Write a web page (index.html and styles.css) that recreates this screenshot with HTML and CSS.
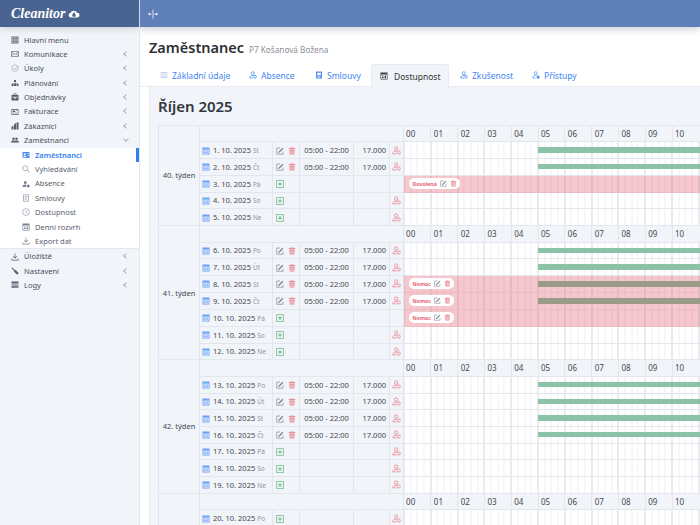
FILE: index.html
```html
<!DOCTYPE html>
<html lang="cs">
<head>
<meta charset="utf-8">
<title>Zaměstnanec</title>
<link rel="stylesheet" href="styles.css">
</head>
<body>
<svg class="defs" aria-hidden="true">
<symbol id="grid" viewBox="0 0 16 16"><path fill="currentColor" d="M1 1h14v14H1zM2.500 2.500v2.500h2.500v-2.500zM6.700 2.500v2.500h2.600v-2.500zM11 2.500v2.500h2.500v-2.500zM2.500 6.700v2.600h2.500v-2.600zM6.700 6.700v2.600h2.600v-2.600zM11 6.700v2.600h2.500v-2.600zM2.500 11v2.500h2.500v-2.500zM6.700 11v2.500h2.600v-2.500zM11 11v2.500h2.500v-2.500z" fill-rule="evenodd"/></symbol>
<symbol id="mail" viewBox="0 0 16 16"><path fill="none" stroke="currentColor" stroke-width="1.200" d="M1 3h14v10H1zM1 4l7 5 7-5M1 12l5-4.500M15 12l-5-4.500"/></symbol>
<symbol id="check" viewBox="0 0 16 16"><circle cx="8" cy="8" r="6.500" fill="none" stroke="currentColor" stroke-width="1.200"/><path fill="none" stroke="currentColor" stroke-width="1.500" d="M5 8l2.500 2.500L13 5"/></symbol>
<symbol id="tree" viewBox="0 0 16 16"><path fill="currentColor" d="M6 2h4v4H6zM1 10h4v4H1zM6 10h4v4H6zM11 10h4v4h-4zM7.500 6h1v2h4.500v2h-1V9H8.500v1h-1V9H4v1H3V8h4.500z"/></symbol>
<symbol id="case" viewBox="0 0 16 16"><path fill="currentColor" fill-rule="evenodd" d="M5 1h6v3h4v11H1V4h4zM6.300 2.300V4h3.400V2.300zM2.500 7.500v1.500h11V7.500zM6.500 9.500v2h3v-2z"/></symbol>
<symbol id="inv" viewBox="0 0 16 16"><path fill="currentColor" fill-rule="evenodd" d="M1 2h14v12H1zM2.300 3.300v9.400h11.400V3.300zM3.500 5h5v3h-5zM3.500 9.500h9v1h-9zM10 5h2.500v1H10z"/></symbol>
<symbol id="bld" viewBox="0 0 16 16"><path fill="currentColor" d="M1 15V9l4-1v7zM6 15V5l4-3v13zM11 15V1h4v14z"/></symbol>
<symbol id="team" viewBox="0 0 16 16"><path fill="currentColor" d="M5 3a2.500 2.500 0 1 1 0 5 2.500 2.500 0 0 1 0-5zM11 3a2.500 2.500 0 1 1 0 5 2.500 2.500 0 0 1 0-5zM0 13c0-3 2-4 5-4 1.300 0 2.300.2 3 .7.700-.5 1.700-.7 3-.7 3 0 5 1 5 4H0z"/></symbol>
<symbol id="card" viewBox="0 0 16 16"><path fill="currentColor" fill-rule="evenodd" d="M1 2h14v12H1zM5.500 4.500a2 2 0 1 0 0 4 2 2 0 0 0 0-4zM2.500 12.500h6c0-2-1-3-3-3s-3 1-3 3zM10 5v1h3.500V5zM10 8v1h3.500V8z"/></symbol>
<symbol id="search" viewBox="0 0 16 16"><circle cx="6.500" cy="6.500" r="5" fill="none" stroke="currentColor" stroke-width="1.200"/><path stroke="currentColor" stroke-width="1.600" d="M10.500 10.500L15 15"/></symbol>
<symbol id="userm" viewBox="0 0 16 16"><path fill="currentColor" d="M6.500 2a3 3 0 1 1 0 6 3 3 0 0 1 0-6zM1 14c0-3.500 2-5 5.500-5 1 0 2 .2 2.700.5A4 4 0 0 0 8.500 14H1z"/><circle cx="12.500" cy="12" r="3" fill="currentColor"/></symbol>
<symbol id="doc" viewBox="0 0 16 16"><path fill="none" stroke="currentColor" stroke-width="1.200" d="M3 1.500h10v13H3zM5.500 5h5M5.500 8h5M5.500 11h3"/></symbol>
<symbol id="docf" viewBox="0 0 16 16"><path fill="currentColor" fill-rule="evenodd" d="M2 1h12v14H2zM4.500 3.500v5h7v-5zM4.500 10v1h7v-1zM4.500 12v1h5v-1z"/></symbol>
<symbol id="clock" viewBox="0 0 16 16"><circle cx="8" cy="8" r="6.800" fill="none" stroke="currentColor" stroke-width="1.100"/><path fill="none" stroke="currentColor" d="M8 4v4.500l3 1.500"/></symbol>
<symbol id="sched" viewBox="0 0 16 16"><path fill="currentColor" fill-rule="evenodd" d="M1 1h14v14H1zM2.300 5v8.700h11.400V5zM4 7h2v2H4zM7 7h2v2H7zM10 7h2v5h-2zM4 10h2v2H4zM7 10h2v2H7z"/></symbol>
<symbol id="down" viewBox="0 0 16 16"><path fill="currentColor" d="M7.300 1h1.400v7.500l2.300-2.300 1 1L8 11 4 7.200l1-1 2.300 2.300zM1 11h1.500v2.500h11V11H15v4H1z"/></symbol>
<symbol id="wrench" viewBox="0 0 16 16"><path fill="currentColor" d="M1 2.500L2.500 1 8 6.500l1.500-.5L15 12c.5 1-1.800 3.200-3 3L6 9.500 6.500 8z"/></symbol>
<symbol id="logs" viewBox="0 0 16 16"><path fill="currentColor" d="M1 1h14v3H1zM1 5h14v1.500H1zM1 7.500h14V9H1zM1 10h14v1.500H1zM1 12.500h14V14H1z"/></symbol>
<symbol id="list" viewBox="0 0 16 16"><path fill="currentColor" d="M1 3h14v1.300H1zM1 7.300h14v1.300H1zM1 11.700h14V13H1z"/></symbol>
<symbol id="person" viewBox="0 0 16 16"><circle cx="7.500" cy="4.500" r="3" fill="none" stroke="currentColor" stroke-width="1.600"/><path fill="none" stroke="currentColor" stroke-width="1.600" d="M8 14H1.500c0-3.500 2.500-5 6-5 .6 0 1.200.1 1.700.2"/><circle cx="12" cy="11.500" r="2.800" fill="none" stroke="currentColor" stroke-width="1.600"/></symbol>
<symbol id="personb" viewBox="0 0 16 16"><circle cx="7.500" cy="4.500" r="3" fill="none" stroke="currentColor" stroke-width="1.400"/><path fill="none" stroke="currentColor" stroke-width="1.400" d="M7 14H1.500c0-3.500 2.500-5 6-5 .6 0 1.200.1 1.700.2"/><path fill="currentColor" d="M9.500 9.500H15V15H9.500z"/></symbol>
<symbol id="cal" viewBox="0 0 16 16"><path fill="currentColor" d="M1 1h14v14H1z"/><path fill="#fff" fill-opacity=".7" d="M2.500 5h11v8.500h-11z"/><path fill="currentColor" fill-opacity=".75" d="M4 7h2v2H4zM7 7h2v2H7zM10 7h2v2h-2zM4 10h2v2H4zM7 10h2v2H7zM10 10h2v2h-2z"/></symbol>
<symbol id="edit" viewBox="0 0 16 16"><path fill="none" stroke="currentColor" stroke-width="1.300" d="M14 9v5.500H1.500V2H8"/><path fill="currentColor" d="M5 9.500L12.800 1.700l1.800 1.800L6.800 11.300 4.500 12z"/></symbol>
<symbol id="trash" viewBox="0 0 16 16"><path fill="currentColor" fill-rule="evenodd" d="M5.500 1h5l.5 1h3.500v2h-13V2H5zM2.500 5h11l-1 10h-9zM5 7l.4 6.500h1L6 7zM7.500 7v6.500h1V7zM10 7l-.4 6.500h1L11 7z"/></symbol>
<symbol id="plus" viewBox="0 0 16 16"><path fill="#e9f5ee" stroke="currentColor" stroke-width="1.500" d="M1 1h14v14H1z"/><path fill="currentColor" d="M7.200 4h1.600v3.200H12v1.600H8.800V12H7.200V8.800H4V7.200h3.200z"/></symbol>
<symbol id="split" viewBox="0 0 16 16"><path fill="currentColor" d="M7.400 1h1.200v14H7.400zM0 8l3-2.500V7.400h3v1.200H3v1.900zM16 8l-3-2.500V7.400h-3v1.200h3v1.900z"/></symbol>
</svg>

<div class="app">
<aside class="side">
  <div class="brand"><span class="brand-name">Cleanitor</span><svg class="brand-mark" viewBox="0 0 20 14"><path fill="#fff" fill-rule="evenodd" d="M5 13a4 4 0 0 1-.8-7.900A6 6 0 0 1 15 5a4 4 0 0 1 .5 8zM7 9a3 3 0 0 0 6 0c0-1.500-2-4-3-5-1 1-3 3.500-3 5z"/></svg></div>
  <nav class="menu">
    <a class="mi"><svg class="ic"><use href="#grid"/></svg>Hlavní menu</a>
    <a class="mi"><svg class="ic"><use href="#mail"/></svg>Komunikace<i class="chev"></i></a>
    <a class="mi"><svg class="ic lt"><use href="#check"/></svg>Úkoly<i class="chev"></i></a>
    <a class="mi"><svg class="ic"><use href="#tree"/></svg>Plánování<i class="chev"></i></a>
    <a class="mi"><svg class="ic"><use href="#case"/></svg>Objednávky<i class="chev"></i></a>
    <a class="mi"><svg class="ic"><use href="#inv"/></svg>Fakturace<i class="chev"></i></a>
    <a class="mi"><svg class="ic"><use href="#bld"/></svg>Zákazníci<i class="chev"></i></a>
    <a class="mi"><svg class="ic"><use href="#team"/></svg>Zaměstnanci<i class="chev open"></i></a>
    <div class="sub">
      <a class="si on"><svg class="ic"><use href="#card"/></svg>Zaměstnanci</a>
      <a class="si"><svg class="ic"><use href="#search"/></svg>Vyhledávání</a>
      <a class="si"><svg class="ic"><use href="#userm"/></svg>Absence</a>
      <a class="si"><svg class="ic"><use href="#doc"/></svg>Smlouvy</a>
      <a class="si"><svg class="ic"><use href="#clock"/></svg>Dostupnost</a>
      <a class="si"><svg class="ic"><use href="#sched"/></svg>Denní rozvrh</a>
      <a class="si"><svg class="ic"><use href="#down"/></svg>Export dat</a>
    </div>
    <a class="mi"><svg class="ic"><use href="#down"/></svg>Úložiště<i class="chev"></i></a>
    <a class="mi"><svg class="ic"><use href="#wrench"/></svg>Nastavení<i class="chev"></i></a>
    <a class="mi"><svg class="ic"><use href="#logs"/></svg>Logy<i class="chev"></i></a>
  </nav>
</aside>

<main class="main">
  <header class="top"><svg class="toggle"><use href="#split"/></svg></header>
  <div class="head"><h1 class="title">Zaměstnanec</h1><span class="subtitle">P7 Košanová Božena</span></div>
  <div class="tabs">
    <a class="tab t1"><svg class="tic gr"><use href="#list"/></svg>Základní údaje</a>
    <a class="tab t2"><svg class="tic"><use href="#person"/></svg>Absence</a>
    <a class="tab t3"><svg class="tic"><use href="#docf"/></svg>Smlouvy</a>
    <a class="tab act"><svg class="tic"><use href="#sched"/></svg>Dostupnost</a>
    <a class="tab t5"><svg class="tic"><use href="#person"/></svg>Zkušenost</a>
    <a class="tab t6"><svg class="tic"><use href="#personb"/></svg>Přístupy</a>
  </div>
  <section class="panel">
    <h2 class="month">Říjen 2025</h2>
    <table class="tbl">
      <colgroup><col class="c1"><col class="c2"><col class="c3"><col class="c4"><col class="c5"><col class="c6"><col class="c7"></colgroup>

      <tr><td class="wk" rowspan="6">40. týden</td><td colspan="5"></td><td class="hrs"><span>00</span><span>01</span><span>02</span><span>03</span><span>04</span><span>05</span><span>06</span><span>07</span><span>08</span><span>09</span><span>10</span></td></tr>
      <tr><td class="d"><svg class="x"><use href="#cal"/></svg>1. 10. 2025 <small>St</small></td><td class="a"><svg class="x e"><use href="#edit"/></svg><svg class="x r"><use href="#trash"/></svg></td><td class="tm">05:00 - 22:00</td><td class="n">17.000</td><td class="p"><svg class="x r"><use href="#person"/></svg></td><td class="g"><div class="bar"></div></td></tr>
      <tr><td class="d"><svg class="x"><use href="#cal"/></svg>2. 10. 2025 <small>Čt</small></td><td class="a"><svg class="x e"><use href="#edit"/></svg><svg class="x r"><use href="#trash"/></svg></td><td class="tm">05:00 - 22:00</td><td class="n">17.000</td><td class="p"><svg class="x r"><use href="#person"/></svg></td><td class="g"><div class="bar"></div></td></tr>
      <tr><td class="d"><svg class="x"><use href="#cal"/></svg>3. 10. 2025 <small>Pá</small></td><td class="a"><svg class="x gn"><use href="#plus"/></svg></td><td class="tm"></td><td class="n"></td><td class="p"></td><td class="g off"><div class="abs"><div class="pill">Dovolená<svg class="x e"><use href="#edit"/></svg><svg class="x r"><use href="#trash"/></svg></div></div></td></tr>
      <tr><td class="d"><svg class="x"><use href="#cal"/></svg>4. 10. 2025 <small>So</small></td><td class="a"><svg class="x gn"><use href="#plus"/></svg></td><td class="tm"></td><td class="n"></td><td class="p"><svg class="x r"><use href="#person"/></svg></td><td class="g"></td></tr>
      <tr><td class="d"><svg class="x"><use href="#cal"/></svg>5. 10. 2025 <small>Ne</small></td><td class="a"><svg class="x gn"><use href="#plus"/></svg></td><td class="tm"></td><td class="n"></td><td class="p"><svg class="x r"><use href="#person"/></svg></td><td class="g"></td></tr>

      <tr><td class="wk" rowspan="8">41. týden</td><td colspan="5"></td><td class="hrs"><span>00</span><span>01</span><span>02</span><span>03</span><span>04</span><span>05</span><span>06</span><span>07</span><span>08</span><span>09</span><span>10</span></td></tr>
      <tr><td class="d"><svg class="x"><use href="#cal"/></svg>6. 10. 2025 <small>Po</small></td><td class="a"><svg class="x e"><use href="#edit"/></svg><svg class="x r"><use href="#trash"/></svg></td><td class="tm">05:00 - 22:00</td><td class="n">17.000</td><td class="p"><svg class="x r"><use href="#person"/></svg></td><td class="g"><div class="bar"></div></td></tr>
      <tr><td class="d"><svg class="x"><use href="#cal"/></svg>7. 10. 2025 <small>Út</small></td><td class="a"><svg class="x e"><use href="#edit"/></svg><svg class="x r"><use href="#trash"/></svg></td><td class="tm">05:00 - 22:00</td><td class="n">17.000</td><td class="p"><svg class="x r"><use href="#person"/></svg></td><td class="g"><div class="bar"></div></td></tr>
      <tr><td class="d"><svg class="x"><use href="#cal"/></svg>8. 10. 2025 <small>St</small></td><td class="a"><svg class="x e"><use href="#edit"/></svg><svg class="x r"><use href="#trash"/></svg></td><td class="tm">05:00 - 22:00</td><td class="n">17.000</td><td class="p"><svg class="x r"><use href="#person"/></svg></td><td class="g off"><div class="abs"><div class="pill sick">Nemoc<svg class="x e"><use href="#edit"/></svg><svg class="x r"><use href="#trash"/></svg></div><div class="bar dim"></div></div></td></tr>
      <tr><td class="d"><svg class="x"><use href="#cal"/></svg>9. 10. 2025 <small>Čt</small></td><td class="a"><svg class="x e"><use href="#edit"/></svg><svg class="x r"><use href="#trash"/></svg></td><td class="tm">05:00 - 22:00</td><td class="n">17.000</td><td class="p"><svg class="x r"><use href="#person"/></svg></td><td class="g off"><div class="abs"><div class="pill sick">Nemoc<svg class="x e"><use href="#edit"/></svg><svg class="x r"><use href="#trash"/></svg></div><div class="bar dim"></div></div></td></tr>
      <tr><td class="d"><svg class="x"><use href="#cal"/></svg>10. 10. 2025 <small>Pá</small></td><td class="a"><svg class="x gn"><use href="#plus"/></svg></td><td class="tm"></td><td class="n"></td><td class="p"></td><td class="g off"><div class="abs"><div class="pill sick">Nemoc<svg class="x e"><use href="#edit"/></svg><svg class="x r"><use href="#trash"/></svg></div></div></td></tr>
      <tr><td class="d"><svg class="x"><use href="#cal"/></svg>11. 10. 2025 <small>So</small></td><td class="a"><svg class="x gn"><use href="#plus"/></svg></td><td class="tm"></td><td class="n"></td><td class="p"><svg class="x r"><use href="#person"/></svg></td><td class="g"></td></tr>
      <tr><td class="d"><svg class="x"><use href="#cal"/></svg>12. 10. 2025 <small>Ne</small></td><td class="a"><svg class="x gn"><use href="#plus"/></svg></td><td class="tm"></td><td class="n"></td><td class="p"><svg class="x r"><use href="#person"/></svg></td><td class="g"></td></tr>

      <tr><td class="wk" rowspan="8">42. týden</td><td colspan="5"></td><td class="hrs"><span>00</span><span>01</span><span>02</span><span>03</span><span>04</span><span>05</span><span>06</span><span>07</span><span>08</span><span>09</span><span>10</span></td></tr>
      <tr><td class="d"><svg class="x"><use href="#cal"/></svg>13. 10. 2025 <small>Po</small></td><td class="a"><svg class="x e"><use href="#edit"/></svg><svg class="x r"><use href="#trash"/></svg></td><td class="tm">05:00 - 22:00</td><td class="n">17.000</td><td class="p"><svg class="x r"><use href="#person"/></svg></td><td class="g"><div class="bar"></div></td></tr>
      <tr><td class="d"><svg class="x"><use href="#cal"/></svg>14. 10. 2025 <small>Út</small></td><td class="a"><svg class="x e"><use href="#edit"/></svg><svg class="x r"><use href="#trash"/></svg></td><td class="tm">05:00 - 22:00</td><td class="n">17.000</td><td class="p"><svg class="x r"><use href="#person"/></svg></td><td class="g"><div class="bar"></div></td></tr>
      <tr><td class="d"><svg class="x"><use href="#cal"/></svg>15. 10. 2025 <small>St</small></td><td class="a"><svg class="x e"><use href="#edit"/></svg><svg class="x r"><use href="#trash"/></svg></td><td class="tm">05:00 - 22:00</td><td class="n">17.000</td><td class="p"><svg class="x r"><use href="#person"/></svg></td><td class="g"><div class="bar"></div></td></tr>
      <tr><td class="d"><svg class="x"><use href="#cal"/></svg>16. 10. 2025 <small>Čt</small></td><td class="a"><svg class="x e"><use href="#edit"/></svg><svg class="x r"><use href="#trash"/></svg></td><td class="tm">05:00 - 22:00</td><td class="n">17.000</td><td class="p"><svg class="x r"><use href="#person"/></svg></td><td class="g"><div class="bar"></div></td></tr>
      <tr><td class="d"><svg class="x"><use href="#cal"/></svg>17. 10. 2025 <small>Pá</small></td><td class="a"><svg class="x gn"><use href="#plus"/></svg></td><td class="tm"></td><td class="n"></td><td class="p"><svg class="x r"><use href="#person"/></svg></td><td class="g"></td></tr>
      <tr><td class="d"><svg class="x"><use href="#cal"/></svg>18. 10. 2025 <small>So</small></td><td class="a"><svg class="x gn"><use href="#plus"/></svg></td><td class="tm"></td><td class="n"></td><td class="p"><svg class="x r"><use href="#person"/></svg></td><td class="g"></td></tr>
      <tr><td class="d"><svg class="x"><use href="#cal"/></svg>19. 10. 2025 <small>Ne</small></td><td class="a"><svg class="x gn"><use href="#plus"/></svg></td><td class="tm"></td><td class="n"></td><td class="p"><svg class="x r"><use href="#person"/></svg></td><td class="g"></td></tr>

      <tr><td class="wk" rowspan="2"></td><td colspan="5"></td><td class="hrs"><span>00</span><span>01</span><span>02</span><span>03</span><span>04</span><span>05</span><span>06</span><span>07</span><span>08</span><span>09</span><span>10</span></td></tr>
      <tr><td class="d"><svg class="x"><use href="#cal"/></svg>20. 10. 2025 <small>Po</small></td><td class="a"><svg class="x gn"><use href="#plus"/></svg></td><td class="tm"></td><td class="n"></td><td class="p"><svg class="x r"><use href="#person"/></svg></td><td class="g"></td></tr>
    </table>
  </section>
</main>
</div>
</body>
</html>
```
FILE: styles.css
```css
* { box-sizing: border-box; }
html, body { margin: 0; height: 100%; overflow: hidden; }
body { font-family: "Noto Sans", "Open Sans", sans-serif; background: #fff; color: #333; }
.defs { display: none; }
.app { display: flex; width: 700px; height: 525px; overflow: hidden; }

.side { flex: 0 0 140px; background: #f1f4f9; border-right: 1px solid #e3e7ee; }
.brand { height: 27px; background: #4a6491; display: flex; align-items: center; gap: 3px; padding-left: 11px; box-shadow: 0 2px 6px rgba(60,70,90,.18); }
.brand-name { font: italic bold 14px "Liberation Serif", serif; color: #fff; }
.brand-mark { width: 12px; height: 10px; }
.menu { padding-top: 5.500px; }
.mi, .si { display: flex; align-items: center; font-size: 7.500px; line-height: 14.400px; height: 14.400px; color: #474f60; position: relative; }
.si { padding-left: 22px; color: #565e6e; }
.mi { padding-left: 11px; }
.ic { width: 8px; height: 8px; margin-right: 5px; color: #555e6e; flex: none; }
.ic.lt { color: #9aa2b0; }
.chev { position: absolute; right: 11px; top: 5px; width: 4px; height: 4px; border-left: 1px solid #a9b0bc; border-bottom: 1px solid #a9b0bc; transform: rotate(45deg); }
.chev.open { transform: rotate(-45deg); top: 4px; }
.sub { background: #fff; border-bottom: 1px solid #e3e7ee; }
.si .ic { color: #7b8494; }
.si.on { color: #2f7ff0; font-weight: 600; }
.si.on .ic { color: #4f8ff0; }
.si.on::after { content: ""; position: absolute; right: 0; top: 0; width: 3px; height: 14px; background: #2f7ff0; }

.main { flex: 1; min-width: 0; overflow: hidden; }
.top { height: 27px; background: #5f7fb8; box-shadow: 0 2px 8px rgba(60,70,90,.28); display: flex; align-items: center; padding-left: 8px; }
.toggle { width: 10px; height: 10px; color: #fff; }
.head { display: flex; align-items: baseline; gap: 5px; padding: 8px 0 0 9px; height: 37px; }
.title { margin: 0; font-size: 14.500px; font-weight: 600; color: #2e3136; line-height: 24px; }
.subtitle { font-size: 8.200px; color: #8a8f97; }
.tabs { display: flex; height: 23px; padding-left: 20px; align-items: stretch; border-bottom: 1px solid #e8ebf1; }
.tab { display: flex; align-items: center; font-size: 8.500px; color: #3f86f2; gap: 4px; white-space: nowrap; }
.tic { width: 8px; height: 8px; flex: none; color: #4f8ff0; }
.tic.gr { color: #8fa6d8; }
.t1 { width: 89px; }
.t2 { width: 66px; }
.t3 { width: 56px; }
.act { color: #333; background: #f1f4f9; border: 1px solid #e6e9ef; border-bottom: 0; border-radius: 3px 3px 0 0; width: 78px; padding-left: 8px; gap: 6px; height: 23.500px; }
.act .tic { color: #3a3f48; }
.t5 { width: 83px; padding-left: 11px; }

.panel { background: #f1f4f9; margin-left: 9px; padding: 0 0 0 8px; height: 440px; border-left: 1px solid #e8ebf1; overflow: hidden; }
.month { margin: 0; font-size: 15px; font-weight: 600; color: #33363b; line-height: 39px; height: 37.500px; }
.tbl { border-collapse: collapse; table-layout: fixed; width: 565px; font-size: 7.500px; color: #45484e; }
.c1 { width: 41px; }
.c2 { width: 73px; }
.c3 { width: 27px; }
.c4 { width: 54px; }
.c5 { width: 36px; }
.c6 { width: 13.500px; }
.c7 { width: 320.500px; }
.tbl tr { height: 16.680px; }
.tbl td { border: 1px solid #e3e6ed; padding: 0; height: 16.680px; white-space: nowrap; overflow: hidden; }
.wk { text-align: center; }
.d { padding-left: 2px !important; }
.d small { font-size: 6.500px; color: #9096a0; }
.a { padding-left: 3px !important; }
.p { text-align: center; }
.tm { text-align: center; }
.n { text-align: right; padding-right: 3px !important; }
.x { width: 8px; height: 8px; vertical-align: -1.500px; margin-right: 3px; color: #6aa2f5; }
.x.e { color: #7d8288; }
.a .x { margin-right: 4px; }
.x.r { color: #ea8c95; }
.x.gn { color: #74b694; }
.p .x { margin: 0; width: 9px; height: 9px; }
.hrs { font-size: 0; }
.hrs span { display: inline-block; width: 26.800px; padding-left: 2.500px; border-left: 1px solid #e3e6ed; font-size: 8px; line-height: 15.500px; }
.hrs span:first-child { border-left: 0; }
.g { background-color: #fff; background-image: repeating-linear-gradient(to right, rgba(90,100,130,.17) 0 1px, transparent 1px 26.800px), repeating-linear-gradient(to right, rgba(90,100,130,.1) 0 1px, transparent 1px 6.700px); }
.tbl td.off { background-color: #f6c7cc; border-top-color: #ecbcc2; border-bottom-color: #ecbcc2; }
.bar { margin-left: 134px; height: 5.500px; background: #8cc2a5; }
.abs { height: 16px; display: flex; align-items: center; }
.bar.dim { flex: 1; margin-left: 84px; background: #9a9b88; }
.pill { display: flex; align-items: center; background: #fff; border-radius: 5px; height: 11px; margin-left: 5px; padding: 0 3px 0 4px; font-size: 5.200px; font-weight: 700; color: #e8606e; gap: 3px; width: 51px; flex: none; }
.pill.sick { width: 45px; }
.pill .x { margin: 0; width: 7px; height: 7px; }
```
